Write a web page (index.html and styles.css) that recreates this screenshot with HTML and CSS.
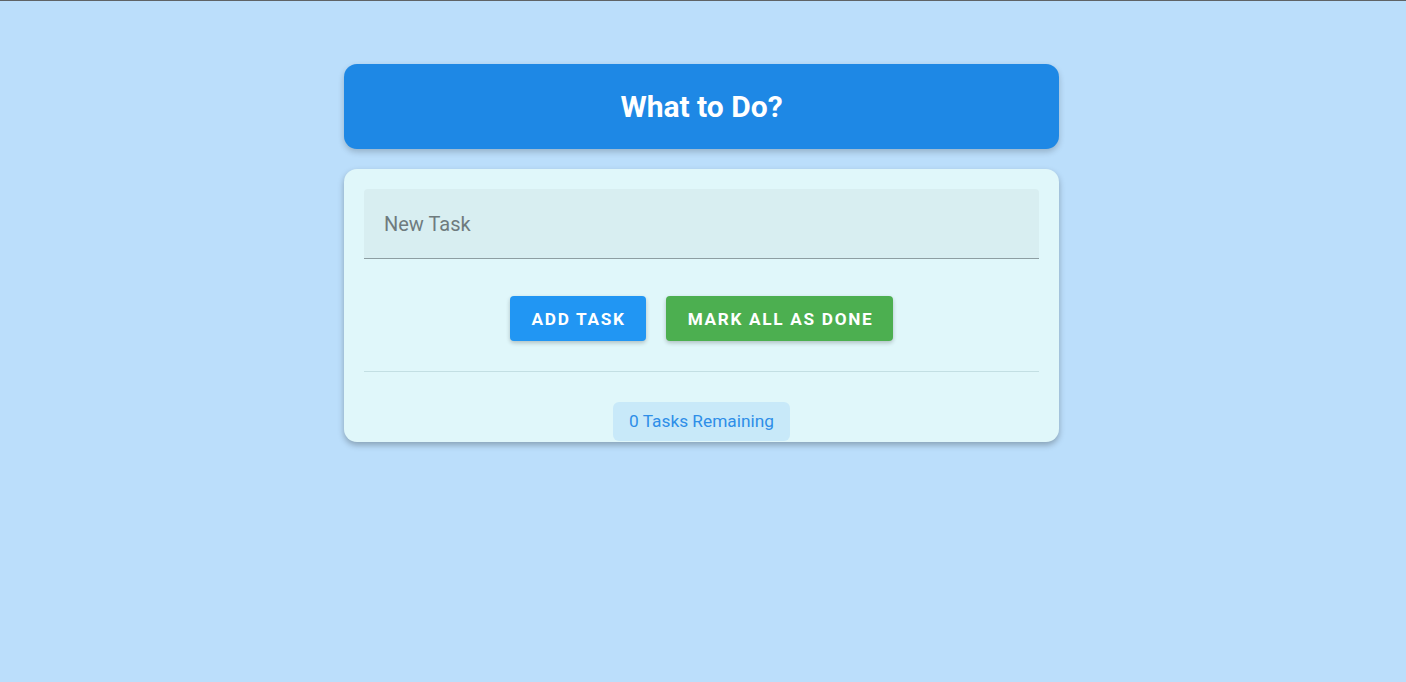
FILE: index.html
```html
<!DOCTYPE html>
<html lang="en">
<head>
<meta charset="utf-8">
<title>What to Do?</title>
<link rel="stylesheet" href="styles.css">
</head>
<body>
<div class="app">
  <header class="header">
    <h1 class="title">What to Do?</h1>
  </header>
  <main class="card">
    <div class="field">
      <input class="field-input" type="text" placeholder="New Task">
    </div>
    <div class="actions">
      <button class="btn btn-add">Add Task</button>
      <button class="btn btn-done">Mark All as Done</button>
    </div>
    <hr class="divider">
    <div class="footer">
      <span class="badge">0 Tasks Remaining</span>
    </div>
  </main>
</div>
</body>
</html>
```
FILE: styles.css
```css
html, body {
  margin: 0;
  padding: 0;
}
body {
  background: #bbdefb;
  border-top: 1px solid #5f6366;
  min-height: 681px;
  padding-right: 3px;
  font-family: Roboto, "Noto Sans", sans-serif;
}
.app {
  width: 715px;
  margin: 63px auto 0;
  display: flex;
  flex-direction: column;
  gap: 20px;
}
.header {
  background: #1e88e5;
  border-radius: 13px;
  height: 85px;
  display: flex;
  align-items: center;
  justify-content: center;
  box-shadow: 0 3px 6px rgba(0, 0, 0, 0.2);
}
.title {
  margin: 0;
  color: #fff;
  font-size: 30px;
  font-weight: 700;
}
.card {
  background: #e0f7fa;
  border-radius: 13px;
  padding: 20px 20px 1px;
  box-shadow: 0 3px 6px rgba(0, 0, 0, 0.28);
  overflow: hidden;
}
.field {
  background: #d8eef1;
  border-bottom: 1px solid #8d9ea2;
  border-radius: 4px 4px 0 0;
  height: 69px;
  display: flex;
}
.field-input {
  flex: 1;
  border: 0;
  outline: none;
  background: transparent;
  padding: 0 20px;
  font-family: Roboto, "Noto Sans", sans-serif;
  font-size: 20px;
  color: #333;
}
.field-input::placeholder {
  color: #6f7b7e;
}
.actions {
  display: flex;
  justify-content: center;
  gap: 20px;
  margin-top: 37px;
}
.btn {
  height: 45px;
  border: 0;
  border-radius: 4px;
  padding: 0 20px 0 22px;
  color: #fff;
  font-family: Roboto, "Noto Sans", sans-serif;
  font-size: 17.2px;
  font-weight: 700;
  letter-spacing: 1.7px;
  text-transform: uppercase;
  box-shadow: 0 2px 4px rgba(0, 0, 0, 0.22);
}
.btn-add {
  background: #2196f3;
}
.btn-done {
  background: #4caf50;
}
.divider {
  border: 0;
  border-top: 1px solid #c3dfe3;
  margin: 30px 0 0;
}
.footer {
  display: flex;
  justify-content: center;
  padding-top: 30px;
}
.badge {
  background: #c8e9f9;
  color: #2e8ee8;
  font-size: 17.3px;
  padding: 0 16px;
  height: 39px;
  line-height: 39px;
  border-radius: 6px;
}
```
